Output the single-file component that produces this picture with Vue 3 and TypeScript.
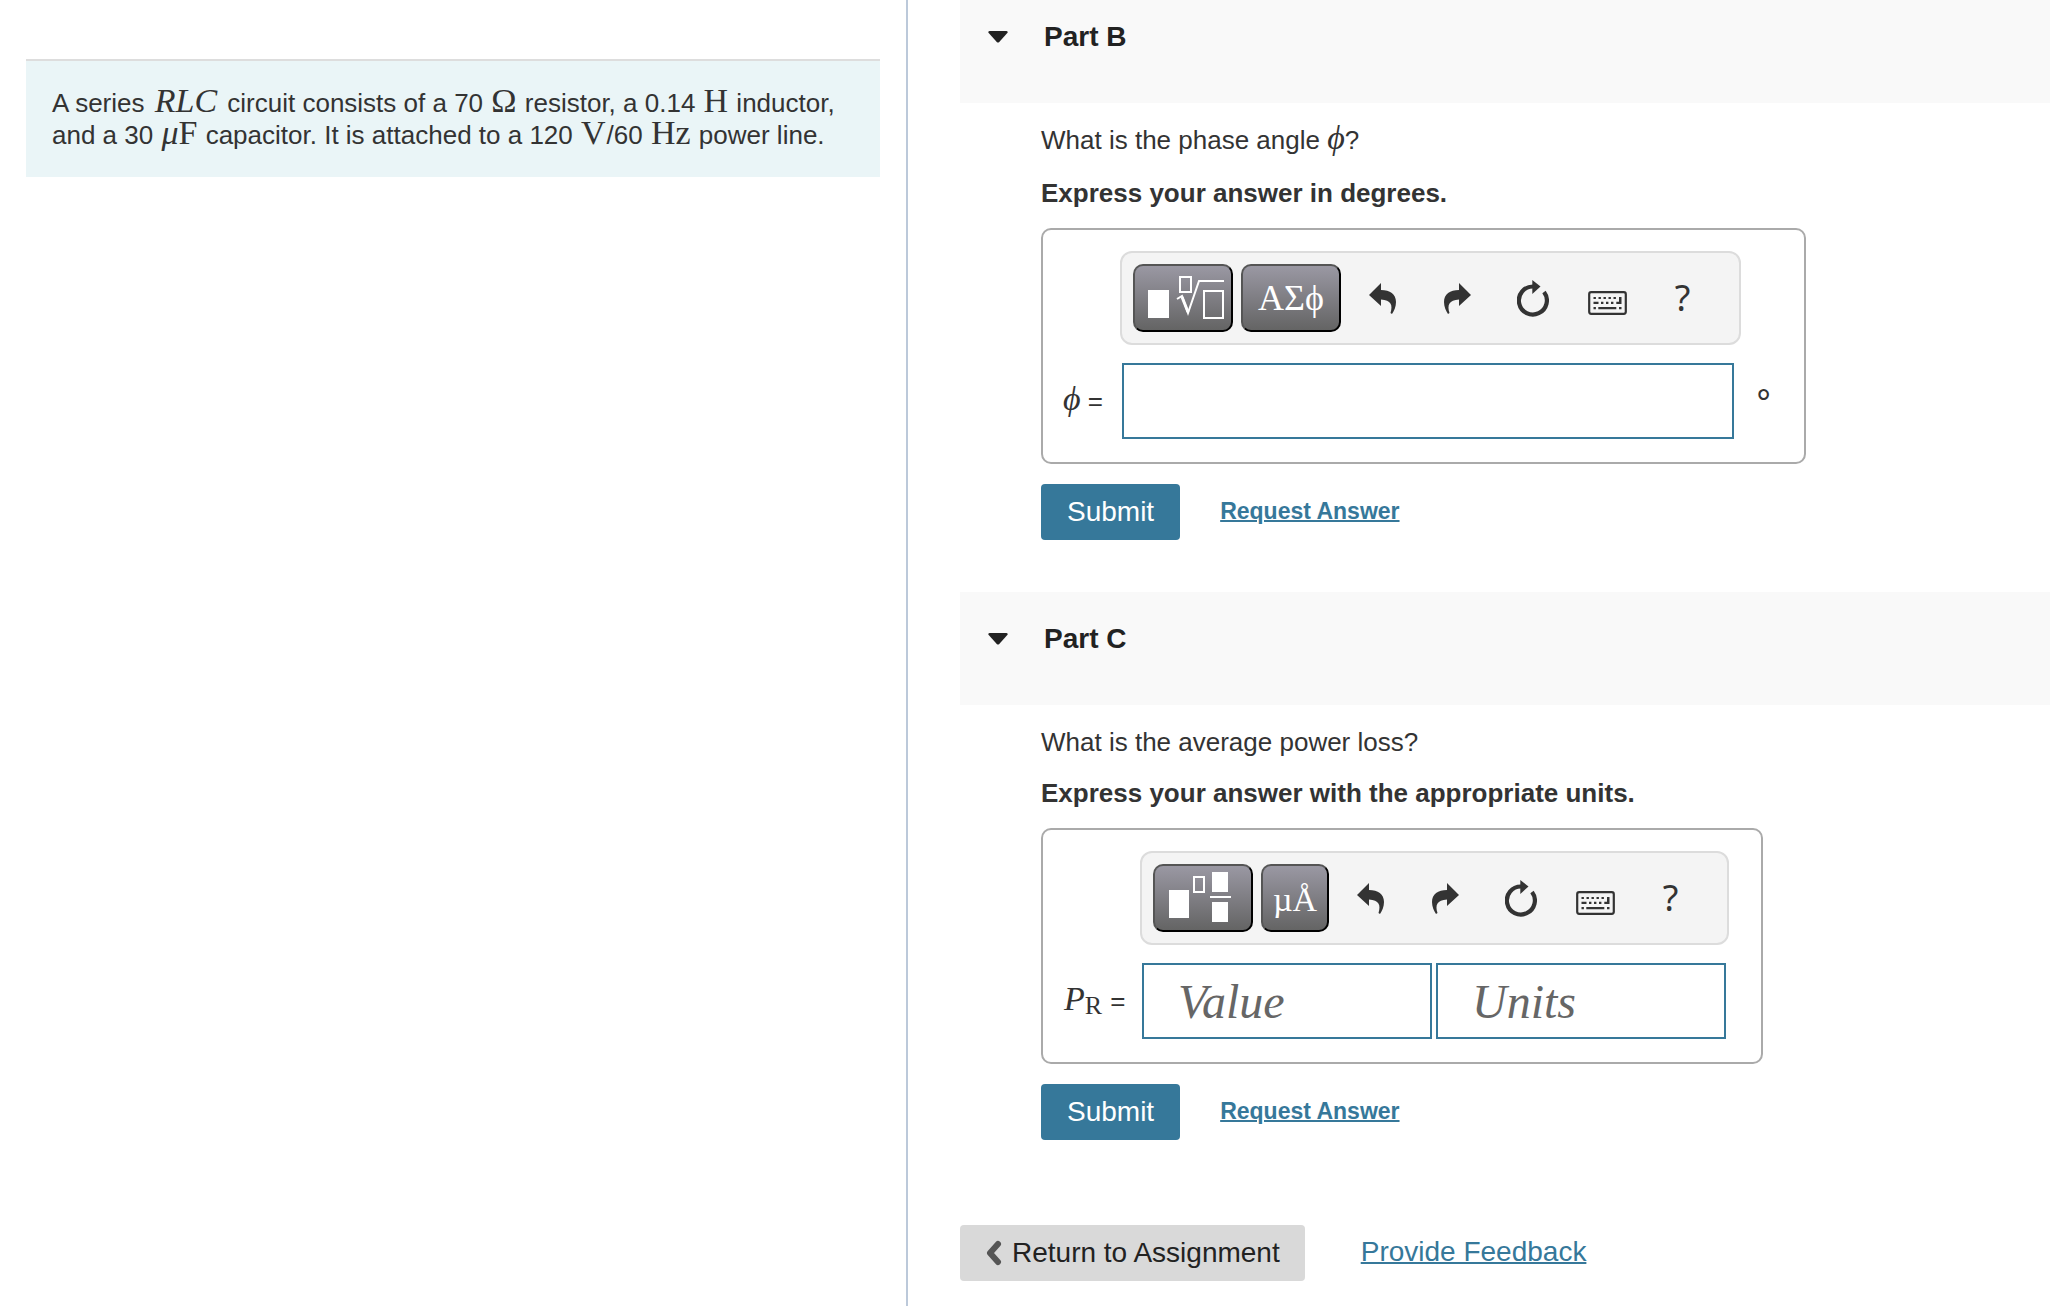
<script setup lang="ts">
import { reactive, ref } from 'vue'

interface Field {
  key: string
  label: string
  placeholder: string
}

interface Part {
  id: string
  title: string
  instruction: string
  template: 'root' | 'fraction'
  symbols: string
  fields: Field[]
}

const parts: Part[] = [
  {
    id: 'b',
    title: 'Part B',
    instruction: 'Express your answer in degrees.',
    template: 'root',
    symbols: 'ΑΣϕ',
    fields: [{ key: 'angle', label: 'Phase angle', placeholder: '' }],
  },
  {
    id: 'c',
    title: 'Part C',
    instruction: 'Express your answer with the appropriate units.',
    template: 'fraction',
    symbols: 'µÅ',
    fields: [
      { key: 'value', label: 'Power value', placeholder: 'Value' },
      { key: 'units', label: 'Power units', placeholder: 'Units' },
    ],
  },
]

const answers = reactive<Record<string, string>>({ angle: '', value: '', units: '' })
const open = reactive<Record<string, boolean>>({ b: true, c: true })
const submitted = ref<string[]>([])

function reset(part: Part): void {
  part.fields.forEach((f) => (answers[f.key] = ''))
}

function submit(part: Part): void {
  submitted.value.push(part.id)
}
</script>

<template>
  <div class="page">
    <aside class="statement">
      <p class="problem">
        A series <span class="math product"><i>RLC</i></span> circuit consists of a 70
        <span class="math">Ω</span> resistor, a 0.14 <span class="math">H</span> inductor, and a 30
        <span class="math"><i>μ</i>F</span> capacitor. It is attached to a 120
        <span class="math">V</span>/60 <span class="math">Hz</span> power line.
      </p>
    </aside>

    <main class="work">
      <section v-for="part in parts" :key="part.id" class="part">
        <h2 class="part-head">
          <button
            type="button"
            class="part-toggle"
            :aria-expanded="open[part.id]"
            @click="open[part.id] = !open[part.id]"
          >
            <svg class="caret" width="20" height="12" viewBox="0 0 20 12" aria-hidden="true">
              <path d="M1.5 0H18.5Q20.500 .5 19.300 2L11 11.200Q10 12 9 11.200L.7 2Q-.5 .5 1.500 0Z" fill="#222" />
            </svg>
            <span>{{ part.title }}</span>
          </button>
        </h2>

        <form v-if="open[part.id]" class="part-body" @submit.prevent="submit(part)">
          <p v-if="part.id === 'b'" class="prompt tall">
            What is the phase angle <span class="math phi">ϕ</span>?
          </p>
          <p v-else class="prompt">What is the average power loss?</p>
          <p class="prompt instruction">{{ part.instruction }}</p>

          <div class="answer" :class="part.template">
            <div class="toolbar" role="toolbar" aria-label="Equation tools">
              <button type="button" class="key" aria-label="Templates">
                <svg v-if="part.template === 'root'" width="96" height="64" viewBox="2 2 96 64">
                  <rect x="15" y="26" width="21" height="28" fill="#fff" />
                  <g fill="none" stroke="#fff" stroke-width="2">
                    <rect x="47" y="13" width="11" height="15" />
                    <rect x="71" y="27" width="19" height="27" />
                    <path d="M44 35L49 32L55 49L66 17H91" />
                    <path d="M49 33L55 48" stroke-width="3" />
                  </g>
                </svg>
                <svg v-else width="96" height="64" viewBox="2 2 96 64">
                  <g fill="#fff">
                    <rect x="16" y="26" width="20" height="28" />
                    <rect x="59" y="8" width="16" height="20" />
                    <rect x="57" y="32" width="21" height="2" />
                    <rect x="59" y="38" width="16" height="20" />
                  </g>
                  <rect x="41" y="13" width="10" height="15" fill="none" stroke="#fff" stroke-width="2" />
                </svg>
              </button>
              <button type="button" class="key symbols" aria-label="Symbols">{{ part.symbols }}</button>
              <div class="actions">
                <button type="button" class="tool" aria-label="Undo">
                  <svg width="27" height="31" viewBox="0 0 27 31">
                    <path d="M0 12L12 0V7C21 7 27 11 27 19C27 24 25 28 23 31L21.500 30C24 22 22 17 12 16.500V23Z" fill="#333" />
                  </svg>
                </button>
                <button type="button" class="tool" aria-label="Redo">
                  <svg width="27" height="31" viewBox="0 0 27 31">
                    <path d="M27 12L15 0V7C6 7 0 11 0 19C0 24 2 28 4 31L5.500 30C3 22 5 17 15 16.500V23Z" fill="#333" />
                  </svg>
                </button>
                <button type="button" class="tool" aria-label="Reset" @click="reset(part)">
                  <svg width="32" height="37" viewBox="0 0 32 37">
                    <path d="M16 6.500A14 14 0 1 0 27 12" fill="none" stroke="#333" stroke-width="4.200" />
                    <path d="M15.300 0L23.500 6.500L15.300 14Z" fill="#333" />
                  </svg>
                </button>
                <button type="button" class="tool" aria-label="Keyboard shortcuts">
                  <svg width="39" height="34" viewBox="0 -10 39 34">
                    <rect x="1.200" y="1.200" width="36.600" height="21.600" rx="2" fill="none" stroke="#333" stroke-width="2.200" />
                    <path
                      d="M5.500 6h2.400v2h-2.400zM10.500 6h2.400v2h-2.400zM15.500 6h2.400v2h-2.400zM20.500 6h2.400v2h-2.400zM25.500 6h2.400v2h-2.400zM31 6h2.500v7h-5.200v-2.300h2.700zM5.500 10.700h5v2.300h-5zM13 10.700h2.400v2.300h-2.400zM18 10.700h2.400v2.300h-2.400zM23 10.700h2.400v2.300h-2.400zM5.500 16h2.400v2.200h-2.400zM10.300 16h18v2.200h-18zM31 16h2.500v2.200h-2.500z"
                      fill="#333"
                    />
                  </svg>
                </button>
                <button type="button" class="tool help" aria-label="Help">?</button>
              </div>
            </div>

            <label class="name" :for="part.fields[0].key">
              <template v-if="part.id === 'b'"><span class="math phi">ϕ</span> =</template>
              <template v-else><span class="math"><i>P</i><sub>R</sub></span> =</template>
            </label>
            <div class="entries">
              <input
                v-for="field in part.fields"
                :id="field.key"
                :key="field.key"
                v-model="answers[field.key]"
                type="text"
                :aria-label="field.label"
                :placeholder="field.placeholder"
              />
              <span v-if="part.id === 'b'" class="degree">∘</span>
            </div>
          </div>

          <div class="buttons">
            <button type="submit" class="submit">Submit</button>
            <a href="#" class="request">Request Answer</a>
          </div>
        </form>
      </section>

      <nav class="footer">
        <button type="button" class="return">
          <svg width="17" height="26" viewBox="0 0 17 26" aria-hidden="true">
            <path d="M13 4L5 13L13 22" fill="none" stroke="#555" stroke-width="6" stroke-linecap="round" stroke-linejoin="round" />
          </svg>
          <span>Return to Assignment</span>
        </button>
        <a href="#" class="feedback">Provide Feedback</a>
      </nav>
    </main>
  </div>
</template>

<style>
body {
  margin: 0;
  background: #fff;
}
</style>

<style scoped>
.page {
  display: grid;
  grid-template-columns: 453fr 572fr;
  min-height: 100vh;
  overflow: hidden;
  font-family: 'Liberation Sans', Arial, sans-serif;
  font-size: 26px;
  line-height: 32px;
  color: #333;
}

button,
input {
  box-sizing: border-box;
  margin: 0;
  font: inherit;
  color: inherit;
}

button {
  cursor: pointer;
}

svg {
  display: block;
}

.statement {
  padding: 59px 26px 0;
}

.problem {
  margin: 0;
  padding: 26px;
  border-top: 2px solid #ddd;
  background: #eaf5f7;
}

.math {
  padding: 0 1px;
  font-family: 'Liberation Serif', 'Times New Roman', serif;
  font-size: 34px;
  line-height: 26px;
}

.product {
  padding: 0 3px;
}

.phi {
  padding: 0;
  font-style: italic;
}

.math sub {
  font-size: 26px;
  line-height: 16px;
  vertical-align: -4px;
}

.work {
  border-left: 2px solid #bcc9da;
  padding-left: 52px;
  margin-top: -10px;
}

.part {
  padding-bottom: 52px;
}

.part-head {
  box-sizing: border-box;
  height: 113px;
  margin: 0;
  padding: 31px 28px 0;
  background: #f9f9f9;
  font-size: 28px;
  line-height: 32px;
}

.part-toggle {
  display: flex;
  align-items: center;
  gap: 36px;
  padding: 0;
  border: 0;
  background: none;
  color: #222;
}

.part-body {
  padding: 21px 0 0 81px;
}

.prompt {
  margin: 0 0 19px;
}

.tall {
  padding-bottom: 2px;
}

.instruction {
  font-weight: bold;
}

.answer {
  display: grid;
  grid-template-columns: 77px auto;
  row-gap: 18px;
  box-sizing: border-box;
  width: fit-content;
  padding: 21px 0 23px;
  border: 2px solid #aaa;
  border-radius: 10px;
}

.answer.fraction {
  grid-template-columns: 97px auto;
}

.toolbar {
  grid-column: 2;
  display: flex;
  align-items: center;
  justify-self: start;
  gap: 8px;
  box-sizing: border-box;
  height: 94px;
  padding: 0 19px 0 11px;
  border: 2px solid #dcdcdc;
  border-radius: 12px;
  background: #f4f4f4;
}

.key {
  height: 68px;
  padding: 0;
  border: 2px solid;
  border-color: #555 #000 #000 #555;
  border-radius: 10px;
  background: linear-gradient(#9a98a3, #646464);
  color: #fff;
}

.symbols {
  width: 100px;
  font-family: 'Liberation Serif', 'DejaVu Serif', serif;
  font-size: 36px;
}

.fraction .symbols {
  width: 68px;
  padding-top: 4px;
  font-size: 34px;
}

.actions {
  display: flex;
  margin-left: -4px;
}

.tool {
  display: flex;
  align-items: center;
  justify-content: center;
  width: 75px;
  height: 68px;
  padding: 0;
  border: 0;
  background: none;
}

.help {
  font-family: 'Noto Sans', sans-serif;
  font-size: 36px;
}

.name {
  align-self: center;
  padding-left: 20px;
  white-space: nowrap;
}

.entries {
  display: flex;
  gap: 4px;
  padding-left: 2px;
}

.entries input {
  width: 612px;
  height: 76px;
  padding: 0 34px;
  border: 2px solid #36789a;
  background: #fff;
  font-family: 'Liberation Serif', serif;
  font-size: 48px;
}

.fraction .entries {
  padding-right: 35px;
}

.fraction .entries input {
  width: 290px;
  font-style: italic;
}

.entries input::placeholder {
  color: #666;
  opacity: 1;
}

.degree {
  width: 50px;
  margin-right: 16px;
  padding-top: 14px;
  font-size: 34px;
  text-align: center;
}

.buttons {
  display: flex;
  align-items: center;
  gap: 40px;
  margin-top: 20px;
}

.submit {
  height: 56px;
  padding: 0 26px;
  border: 0;
  border-radius: 4px;
  background: #36789a;
  color: #fff;
  font-size: 28px;
}

a {
  padding-bottom: 2px;
  color: #36789a;
  text-decoration: underline;
  text-decoration-thickness: 2px;
}

.request {
  font-size: 23px;
  font-weight: bold;
}

.footer {
  display: flex;
  align-items: center;
  gap: 56px;
  padding: 33px 0 24px;
  font-size: 28px;
}

.return {
  display: flex;
  align-items: center;
  gap: 10px;
  height: 56px;
  padding: 0 25px;
  border: 0;
  border-radius: 4px;
  background: #d9d9d9;
  color: #222;
}
</style>
